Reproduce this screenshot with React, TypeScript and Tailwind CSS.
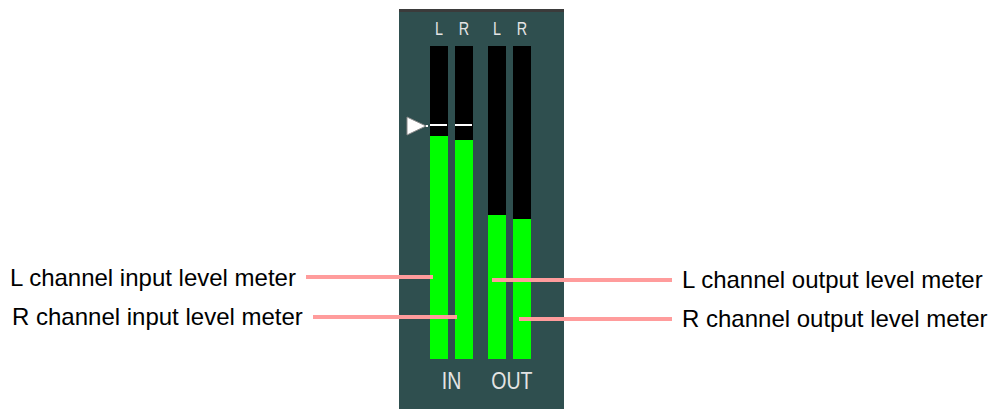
import React from "react";

type Meter = { fill: number; peak?: boolean };

// level meter heights in px (meter box is 313px tall)
const inMeters: Meter[] = [
  { fill: 223, peak: true },
  { fill: 219, peak: true },
];
const outMeters: Meter[] = [{ fill: 144 }, { fill: 140 }];

function Bar({ m }: { m: Meter }) {
  return (
    <div className="relative w-[18px] h-[313px] bg-black flex flex-col justify-end">
      {m.peak && <div className="absolute left-0 right-[1px] top-[78px] h-[2px] bg-white" />}
      <div className="w-full bg-[#00ff00]" style={{ height: m.fill }} />
    </div>
  );
}

function Panel() {
  return (
    <div
      className="relative w-[165px] h-[400px] mt-[9px] bg-[#2f4f4f] border-t-[3px] border-[#3b3b3b] pl-[31px] pt-[8px] flex flex-col"
      style={{ fontFamily: '"Liberation Sans", Arial, sans-serif' }}
    >
      {/* channel letters */}
      <div className="flex h-[18px] text-[18px] leading-[18px] text-[#e4e4e4]">
        <span className="w-[18px] text-center scale-x-[0.8]">L</span>
        <span className="w-[18px] ml-[7px] text-center scale-x-[0.8]">R</span>
        <span className="w-[18px] ml-[15px] text-center scale-x-[0.8]">L</span>
        <span className="w-[18px] ml-[7px] text-center scale-x-[0.8]">R</span>
      </div>

      {/* meters */}
      <div className="flex mt-[8px]">
        <div className="flex gap-[7px]">
          {inMeters.map((m, i) => (
            <Bar key={i} m={m} />
          ))}
        </div>
        <div className="flex gap-[7px] ml-[15px]">
          {outMeters.map((m, i) => (
            <Bar key={i} m={m} />
          ))}
        </div>
      </div>

      {/* IN / OUT */}
      <div className="flex mt-[11px] h-[23px] text-[23px] leading-[23px] text-[#e4e4e4]">
        <span className="w-[43px] text-center scale-x-[0.85]">IN</span>
        <span className="w-[43px] ml-[15px] text-center scale-x-[0.85]">OUT</span>
      </div>

      {/* input threshold arrow */}
      <svg className="absolute left-[7px] top-[104px]" width="22" height="20" viewBox="0 0 22 20">
        <polygon points="1,1 1,19 20,10" fill="#ffffff" stroke="#8a8a8a" strokeWidth="1" />
        <line x1="20" y1="10" x2="22" y2="10" stroke="#ffffff" strokeWidth="2" />
      </svg>
    </div>
  );
}

export default function App() {
  return (
    <div
      className="relative w-[988px] h-[409px] bg-white overflow-hidden flex text-black"
      style={{ fontFamily: '"Liberation Sans", Arial, sans-serif' }}
    >
      {/* left labels */}
      <div className="w-[399px] pt-[266px] pl-[10px] flex flex-col gap-[15px] text-[24px] leading-[24px]">
        <span>L channel input level meter</span>
        <span className="pl-[2px]">R channel input level meter</span>
      </div>

      <Panel />

      {/* right labels */}
      <div className="flex-1 pt-[268px] pl-[118px] flex flex-col gap-[15px] text-[24px] leading-[24px]">
        <span>L channel output level meter</span>
        <span>R channel output level meter</span>
      </div>

      {/* leader lines */}
      <div className="absolute left-[306px] top-[275px] w-[127px] h-[4px] bg-[#ff9c9c]" />
      <div className="absolute left-[313px] top-[315px] w-[144px] h-[4px] bg-[#ff9c9c]" />
      <div className="absolute left-[492px] top-[278px] w-[180px] h-[4px] bg-[#ff9c9c]" />
      <div className="absolute left-[519px] top-[317px] w-[153px] h-[4px] bg-[#ff9c9c]" />
    </div>
  );
}
